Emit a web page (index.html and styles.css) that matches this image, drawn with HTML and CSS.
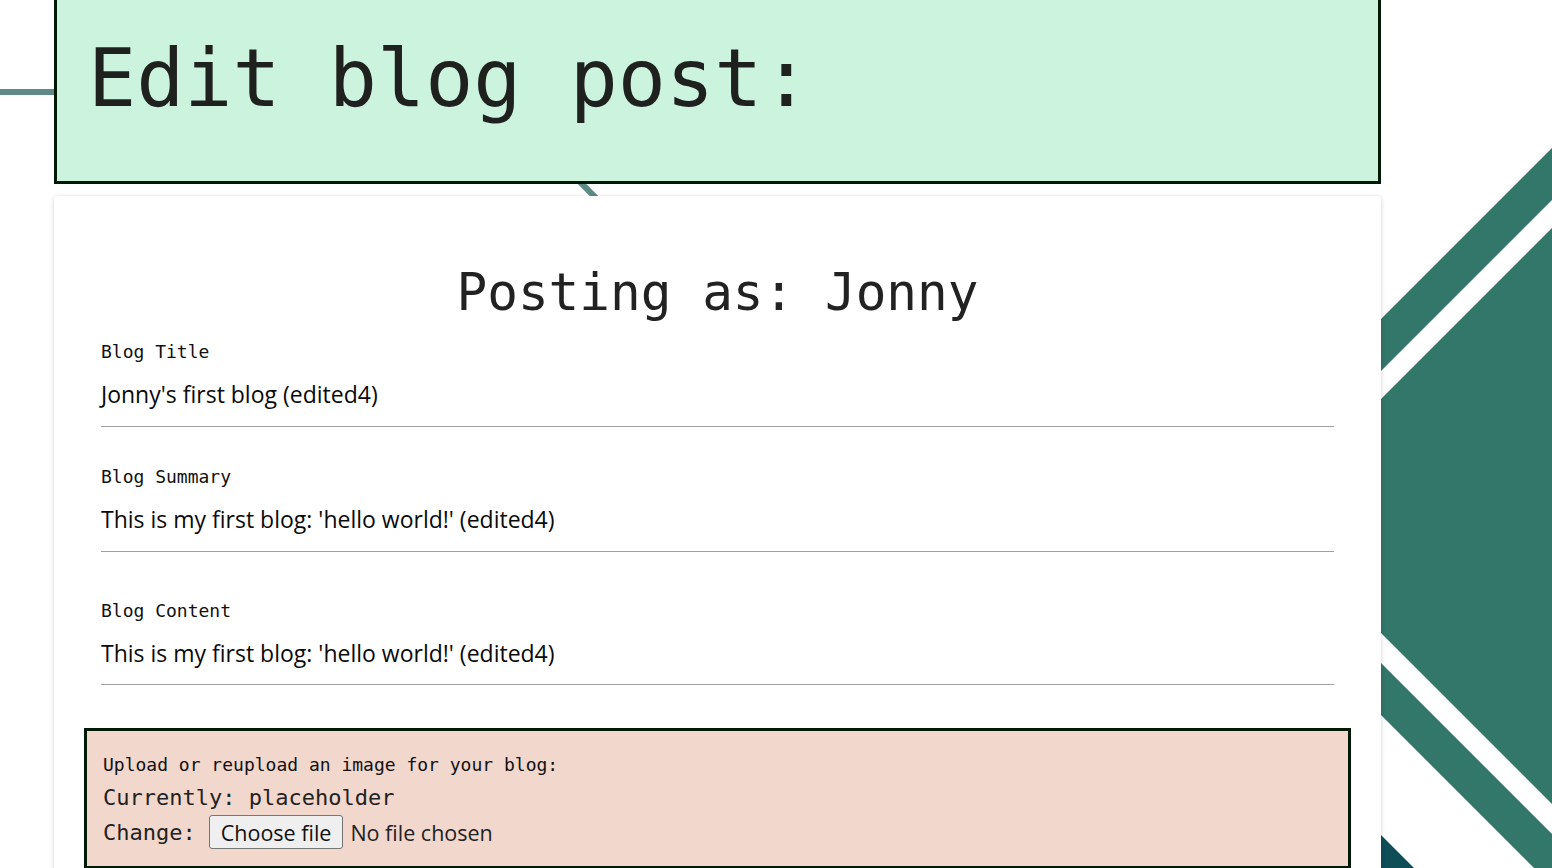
FILE: index.html
```html
<!DOCTYPE html>
<html lang="en">
<head>
<meta charset="utf-8">
<title>Edit blog post</title>
<link rel="stylesheet" href="styles.css">
</head>
<body>
<svg class="backdrop" viewBox="0 0 1552 868" width="1552" height="868" aria-hidden="true">
  <polyline class="thin-line" points="-5,92 490,92 720,322"/>
  <polygon class="teal" points="1552,148 1552,200 1300,452 1300,400"/>
  <polygon class="teal" points="1552,228 1552,804 1300,552 1300,480"/>
  <polygon class="teal" points="1300,582 1552,834 1552,886 1300,634"/>
  <polygon class="teal-dark" points="1300,754 1440,894 1300,894"/>
</svg>
<div class="page">
  <header class="title-box">
    <h1 class="title">Edit blog post:</h1>
  </header>
  <main class="card">
    <h2 class="author">Posting as: Jonny</h2>
    <form class="post-form">
      <div class="field">
        <label class="field-label" for="title">Blog Title</label>
        <div class="field-value" id="title">Jonny's first blog (edited4)</div>
      </div>
      <div class="field field-summary">
        <label class="field-label" for="summary">Blog Summary</label>
        <div class="field-value" id="summary">This is my first blog: 'hello world!' (edited4)</div>
      </div>
      <div class="field field-content">
        <label class="field-label" for="content">Blog Content</label>
        <div class="field-value field-value-short" id="content">This is my first blog: 'hello world!' (edited4)</div>
      </div>
      <div class="upload">
        <p class="upload-label">Upload or reupload an image for your blog:</p>
        <p class="upload-current">Currently: placeholder</p>
        <div class="upload-change">
          <span class="change-label">Change:</span>
          <input class="file-input" type="file" id="image">
          <label class="file-button" for="image">Choose file</label>
          <span class="file-status">No file chosen</span>
        </div>
      </div>
    </form>
  </main>
</div>
</body>
</html>
```

FILE: styles.css
```css
html, body {
  margin: 0;
  padding: 0;
  background: #ffffff;
}

body {
  width: 1552px;
  height: 868px;
  overflow: hidden;
  position: relative;
  font-family: "Open Sans", "Lato", sans-serif;
  color: #111;
}

.backdrop {
  position: absolute;
  left: 0;
  top: 0;
  z-index: 0;
}

.thin-line {
  fill: none;
  stroke: #5d8a86;
  stroke-width: 6;
}

.teal {
  fill: #33766a;
}

.teal-dark {
  fill: #0f4d57;
}

.page {
  position: relative;
  z-index: 1;
  width: 1327px;
  margin-left: 54px;
}

.title-box {
  background: #ccf3de;
  border: 3px solid #001a05;
  border-top: none;
  padding: 39px 0 0 31px;
  box-sizing: border-box;
  height: 184px;
}

.title {
  margin: 0;
  font-family: "DejaVu Sans Mono", monospace;
  font-weight: normal;
  font-size: 80px;
  line-height: 80px;
  color: #1e211e;
}

.card {
  margin-top: 12px;
  background: #fff;
  border-radius: 4px;
  box-shadow: 0 1px 5px rgba(0, 0, 0, 0.18);
  padding: 71px 0 2px;
  height: 700px;
  box-sizing: border-box;
}

.author {
  margin: 0;
  text-align: center;
  font-family: "DejaVu Sans Mono", monospace;
  font-weight: normal;
  font-size: 51px;
  line-height: 52px;
  color: #222;
}

.post-form {
  display: flex;
  flex-direction: column;
  margin-top: 24px;
}

.field {
  margin: 0 47px;
  display: flex;
  flex-direction: column;
}

.field-summary {
  margin-top: 41px;
}

.field-content {
  margin-top: 50px;
}

.field-label {
  font-family: "DejaVu Sans Mono", monospace;
  font-size: 18px;
  line-height: 18px;
  color: #111;
}

.field-value {
  margin-top: 22px;
  font-size: 23px;
  line-height: 22px;
  color: #0a0a0a;
  padding-bottom: 21px;
  border-bottom: 1px solid #a0a0a0;
}

.field-value-short {
  padding-bottom: 20px;
}

.upload {
  margin: 43px 30px 0;
  background: #f2d7cd;
  border: 3px solid #001a05;
  padding: 25px 16px 16px;
}

.upload p {
  margin: 0;
}

.upload-label {
  font-family: "DejaVu Sans Mono", monospace;
  font-size: 18px;
  line-height: 18px;
  color: #111;
}

.upload-current {
  margin-top: 13px !important;
  font-family: "DejaVu Sans Mono", monospace;
  font-size: 22px;
  line-height: 22px;
  color: #222;
}

.upload-change {
  margin-top: 5px;
  display: flex;
  align-items: center;
  height: 36px;
}

.change-label {
  font-family: "DejaVu Sans Mono", monospace;
  font-size: 22px;
  color: #222;
  margin-right: 13px;
}

.file-input {
  display: none;
}

.file-button {
  display: inline-flex;
  align-items: center;
  height: 34px;
  box-sizing: border-box;
  padding: 0 11px;
  font-size: 21.5px;
  background: #efefef;
  border: 1px solid #767676;
  border-radius: 3px;
  color: #111;
}

.file-status {
  margin-left: 7px;
  font-size: 21.5px;
  color: #222;
}
```
